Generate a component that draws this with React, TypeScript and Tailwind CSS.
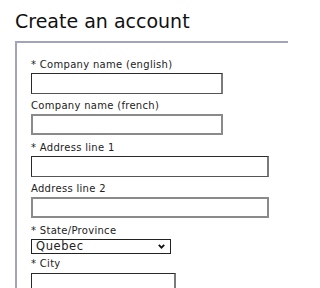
const font = { fontFamily: '"DejaVu Sans", Verdana, sans-serif' }

type FieldProps = {
  label: string
  width: string
  tone: "dark" | "gray"
  mt: string
}

function Field({ label, width, tone, mt }: FieldProps) {
  const border =
    tone === "dark"
      ? "border border-[#2a2a2a] border-r-2 border-r-[#7a7a7a] border-b-[#555]"
      : "border-2 border-[#8a8a8a]"
  return (
    <div className={mt}>
      <div className="h-[12px] text-[10px] leading-[12px] tracking-[0.3px] text-[#222]">{label}</div>
      <input type="text" className={`mt-[2px] block h-[21px] bg-white outline-none ${width} ${border}`} />
    </div>
  )
}

export default function App() {
  return (
    <div className="h-[288px] w-[288px] overflow-hidden bg-white" style={font}>
      <h2 className="ml-[15px] mt-[10px] text-[19px] leading-[22px] font-normal text-[#111]">
        Create an account
      </h2>
      <div className="ml-[15px] mt-[9px] border-l-2 border-t-2 border-[#a0a5bd] pl-[14px] pt-[16px] pb-4">
        <Field label="* Company name (english)" width="w-[192px]" tone="dark" mt="" />
        <Field label="Company name (french)" width="w-[192px]" tone="gray" mt="mt-[6px]" />
        <Field label="* Address line 1" width="w-[238px]" tone="dark" mt="mt-[7px]" />
        <Field label="Address line 2" width="w-[238px]" tone="gray" mt="mt-[6px]" />
        <div className="mt-[7px]">
          <div className="h-[12px] text-[10px] leading-[12px] tracking-[0.3px] text-[#222]">* State/Province</div>
          <div className="mt-[2px] flex h-[15px] w-[140px] items-center justify-between border border-[#222] bg-white pl-[4px] pr-[5px]">
            <span className="text-[11.5px] leading-[13px] tracking-[0.6px] text-[#222]">Quebec</span>
            <svg width="7" height="5" viewBox="0 0 7 5">
              <polyline points="0.8,0.8 3.5,3.6 6.2,0.8" fill="none" stroke="#111" strokeWidth="1.8" />
            </svg>
          </div>
        </div>
        <div className="mt-[4px]">
          <div className="h-[12px] text-[10px] leading-[12px] tracking-[0.3px] text-[#222]">* City</div>
          <input
            type="text"
            className="mt-[3px] block h-[21px] w-[145px] border border-[#2a2a2a] border-r-2 border-r-[#7a7a7a] bg-white outline-none"
          />
        </div>
      </div>
    </div>
  )
}
